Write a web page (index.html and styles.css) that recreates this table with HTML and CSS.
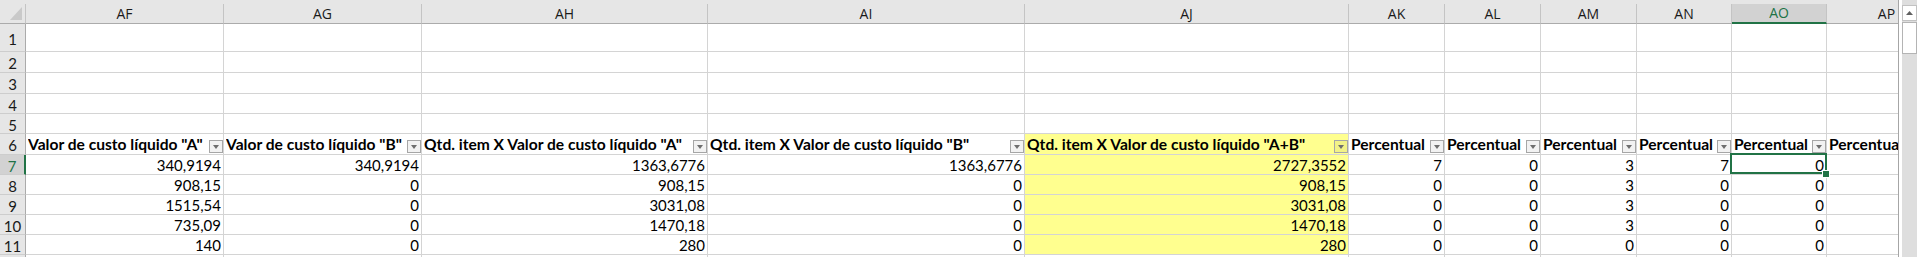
FILE: index.html
```html
<!DOCTYPE html>
<html lang="pt-BR">
<head>
<meta charset="utf-8">
<title>Planilha - custo líquido</title>
<link rel="stylesheet" href="styles.css">
</head>
<body>
<div class="app">
  <div class="viewport">
    <div class="row colhead">
      <div class="ch corner"><svg class="tri" width="12" height="13" viewBox="0 0 12 13"><polygon points="12,0 12,13 0,13" fill="#c9c9c9"/></svg></div>
      <div class="ch">AF</div>
      <div class="ch">AG</div>
      <div class="ch">AH</div>
      <div class="ch">AI</div>
      <div class="ch">AJ</div>
      <div class="ch">AK</div>
      <div class="ch">AL</div>
      <div class="ch">AM</div>
      <div class="ch">AN</div>
      <div class="ch sel">AO</div>
      <div class="ch">AP</div>
    </div>

    <div class="row h28">
      <div class="c rh">1</div>
      <div class="c"></div><div class="c"></div><div class="c"></div><div class="c"></div><div class="c"></div><div class="c"></div><div class="c"></div><div class="c"></div><div class="c"></div><div class="c"></div><div class="c"></div>
    </div>
    <div class="row h21">
      <div class="c rh">2</div>
      <div class="c"></div><div class="c"></div><div class="c"></div><div class="c"></div><div class="c"></div><div class="c"></div><div class="c"></div><div class="c"></div><div class="c"></div><div class="c"></div><div class="c"></div>
    </div>
    <div class="row h21">
      <div class="c rh">3</div>
      <div class="c"></div><div class="c"></div><div class="c"></div><div class="c"></div><div class="c"></div><div class="c"></div><div class="c"></div><div class="c"></div><div class="c"></div><div class="c"></div><div class="c"></div>
    </div>
    <div class="row h20">
      <div class="c rh">4</div>
      <div class="c"></div><div class="c"></div><div class="c"></div><div class="c"></div><div class="c"></div><div class="c"></div><div class="c"></div><div class="c"></div><div class="c"></div><div class="c"></div><div class="c"></div>
    </div>
    <div class="row h20">
      <div class="c rh">5</div>
      <div class="c"></div><div class="c"></div><div class="c"></div><div class="c"></div><div class="c"></div><div class="c"></div><div class="c"></div><div class="c"></div><div class="c"></div><div class="c"></div><div class="c"></div>
    </div>

    <!-- table header with autofilter buttons -->
    <div class="row h21">
      <div class="c rh">6</div>
      <div class="c th"><span class="lbl">Valor de custo líquido "A"</span><span class="filter"></span></div>
      <div class="c th"><span class="lbl">Valor de custo líquido "B"</span><span class="filter"></span></div>
      <div class="c th"><span class="lbl">Qtd. item X Valor de custo líquido "A"</span><span class="filter"></span></div>
      <div class="c th"><span class="lbl">Qtd. item X Valor de custo líquido "B"</span><span class="filter"></span></div>
      <div class="c th hl"><span class="lbl">Qtd. item X Valor de custo líquido "A+B"</span><span class="filter"></span></div>
      <div class="c th"><span class="lbl">Percentual</span><span class="filter"></span></div>
      <div class="c th"><span class="lbl">Percentual</span><span class="filter"></span></div>
      <div class="c th"><span class="lbl">Percentual</span><span class="filter"></span></div>
      <div class="c th"><span class="lbl">Percentual</span><span class="filter"></span></div>
      <div class="c th"><span class="lbl">Percentual</span><span class="filter"></span></div>
      <div class="c th"><span class="lbl">Percentual</span><span class="filter"></span></div>
    </div>

    <div class="row h20">
      <div class="c rh on">7</div>
      <div class="c">340,9194</div><div class="c">340,9194</div><div class="c">1363,6776</div><div class="c">1363,6776</div><div class="c hl">2727,3552</div>
      <div class="c">7</div><div class="c">0</div><div class="c">3</div><div class="c">7</div><div class="c cur">0</div><div class="c"></div>
    </div>
    <div class="row h20">
      <div class="c rh">8</div>
      <div class="c">908,15</div><div class="c">0</div><div class="c">908,15</div><div class="c">0</div><div class="c hl">908,15</div>
      <div class="c">0</div><div class="c">0</div><div class="c">3</div><div class="c">0</div><div class="c">0</div><div class="c"></div>
    </div>
    <div class="row h20">
      <div class="c rh">9</div>
      <div class="c">1515,54</div><div class="c">0</div><div class="c">3031,08</div><div class="c">0</div><div class="c hl">3031,08</div>
      <div class="c">0</div><div class="c">0</div><div class="c">3</div><div class="c">0</div><div class="c">0</div><div class="c"></div>
    </div>
    <div class="row h20">
      <div class="c rh">10</div>
      <div class="c">735,09</div><div class="c">0</div><div class="c">1470,18</div><div class="c">0</div><div class="c hl">1470,18</div>
      <div class="c">0</div><div class="c">0</div><div class="c">3</div><div class="c">0</div><div class="c">0</div><div class="c"></div>
    </div>
    <div class="row h20">
      <div class="c rh">11</div>
      <div class="c">140</div><div class="c">0</div><div class="c">280</div><div class="c">0</div><div class="c hl">280</div>
      <div class="c">0</div><div class="c">0</div><div class="c">0</div><div class="c">0</div><div class="c">0</div><div class="c"></div>
    </div>
    <!-- next row, only its top edge fits in the window -->
    <div class="row h20">
      <div class="c rh"></div>
      <div class="c"></div><div class="c"></div><div class="c"></div><div class="c"></div><div class="c"></div><div class="c"></div><div class="c"></div><div class="c"></div><div class="c"></div><div class="c"></div><div class="c"></div>
    </div>
  </div>

  <div class="vscroll">
    <div class="sb-up"><svg width="7" height="4" viewBox="0 0 7 4"><polygon points="3.5,0 7,4 0,4" fill="#606060"/></svg></div>
    <div class="sb-thumb"></div>
  </div>
</div>
</body>
</html>
```

FILE: styles.css
```css
* {
  box-sizing: border-box;
  margin: 0;
  padding: 0;
}

body {
  width: 1920px;
  height: 257px;
  overflow: hidden;
  background: #fff;
  font-family: "Lato", "Carlito", sans-serif;
  color: #000;
}

.app {
  display: flex;
  height: 257px;
}

/* grid area */
.viewport {
  width: 1899px;
  height: 257px;
  overflow: hidden;
  border-right: 1px solid #a6a6a6;
}

.row {
  display: grid;
  grid-template-columns: 26px 198px 198px 286px 317px 324px 96px 96px 96px 95px 95px 120px;
}

.h28 { height: 28px; }
.h21 { height: 21px; }
.h20 { height: 20px; }

/* column letters */
.colhead {
  height: 24px;
  padding-top: 4px;
  background: #e6e6e6;
}

.ch {
  display: flex;
  align-items: flex-end;
  justify-content: center;
  border-right: 1px solid #c4c4c4;
  border-bottom: 1px solid #ababab;
  font-family: "Open Sans", "Noto Sans", sans-serif;
  font-size: 14px;
  line-height: 18px;
  color: #1a1a1a;
}

.ch.corner {
  align-items: flex-end;
  justify-content: flex-end;
  padding: 0 3px 3px 0;
}

.ch.sel {
  background: #d2d2d2;
  color: #217346;
  border-bottom: 2px solid #217346;
}

/* cells */
.c {
  display: flex;
  align-items: flex-end;
  justify-content: flex-end;
  padding: 0 2px;
  border-right: 1px solid #d4d4d4;
  border-bottom: 1px solid #d4d4d4;
  font-size: 15px;
  line-height: 18px;
  white-space: nowrap;
  overflow: hidden;
}

.c.hl {
  background: #ffff8f;
}

/* row numbers */
.c.rh {
  align-items: center;
  justify-content: center;
  padding: 3px 0 0;
  background: #e6e6e6;
  border-right-color: #ababab;
  border-bottom-color: #cdcdcd;
  font-size: 15px;
  line-height: 17px;
  color: #1a1a1a;
}

.c.rh.on {
  background: #d2d2d2;
  color: #217346;
  border-right: 2px solid #217346;
}

/* table header cells */
.c.th {
  justify-content: space-between;
  padding: 0 0 0 2px;
  font-size: 15.6px;
  font-weight: 700;
}

.th .lbl {
  flex: 1;
  min-width: 0;
  overflow: hidden;
  padding-bottom: 1px;
}

.filter {
  flex: none;
  width: 14px;
  height: 13px;
  margin-bottom: 1px;
  border: 1px solid #a6a6a6;
  background: rgba(0, 0, 0, 0.05);
  display: flex;
  align-items: center;
  justify-content: center;
}

.filter::after {
  content: "";
  border-left: 3.5px solid transparent;
  border-right: 3.5px solid transparent;
  border-top: 4px solid #6e6e6e;
}

/* active cell */
.c.cur {
  position: relative;
  overflow: visible;
}

.c.cur::before {
  content: "";
  position: absolute;
  left: -2px;
  top: -2px;
  right: -1px;
  bottom: 0;
  border: 2px solid #217346;
  z-index: 2;
}

.c.cur::after {
  content: "";
  position: absolute;
  right: -3px;
  bottom: -3px;
  width: 6px;
  height: 6px;
  background: #217346;
  box-shadow: 0 0 0 1px #fff;
  z-index: 3;
}

/* vertical scrollbar */
.vscroll {
  width: 21px;
  height: 257px;
  padding: 5px 3px 0;
  background: linear-gradient(#dedede, #dedede) 3px 0 / 15px 100% no-repeat, #fff;
  display: flex;
  flex-direction: column;
  gap: 1px;
}

.sb-up {
  height: 16px;
  background: #fff;
  border: 1px solid #c2c2c2;
  display: flex;
  align-items: center;
  justify-content: center;
}

.sb-thumb {
  height: 32px;
  background: #fff;
  border: 1px solid #b4b4b4;
}
```
